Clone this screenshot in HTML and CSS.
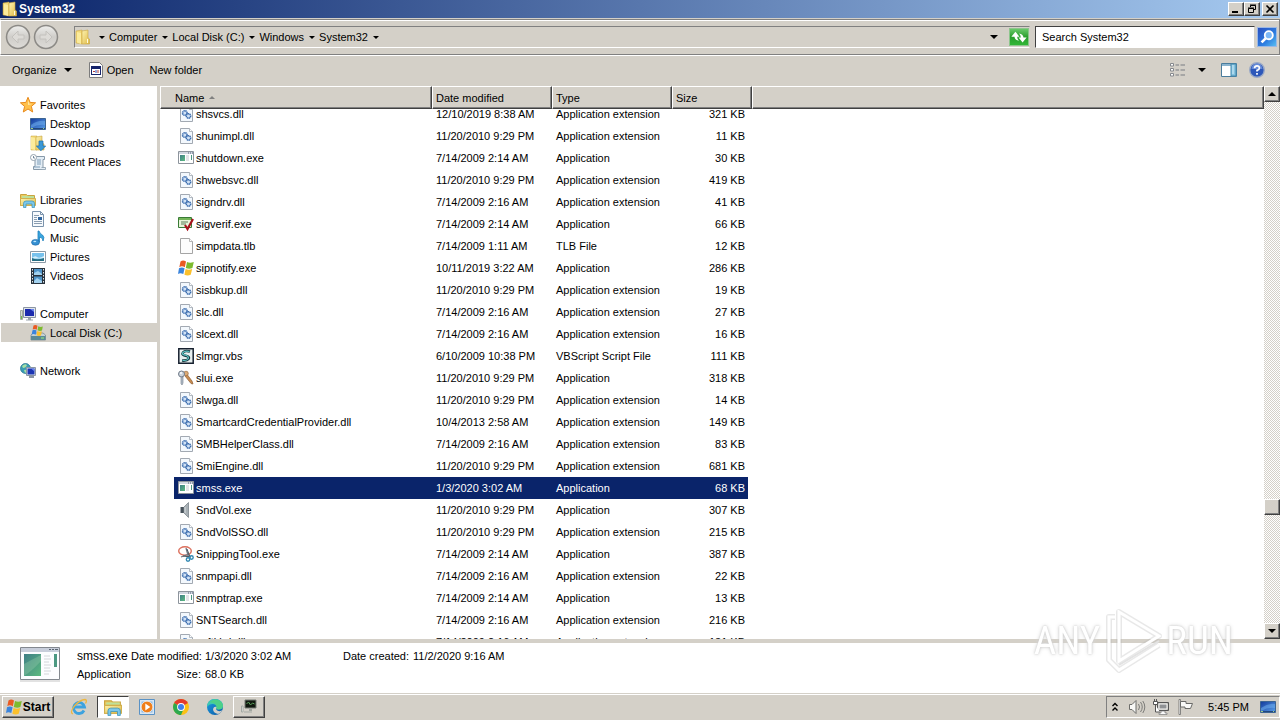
FILE: index.html
```
<!DOCTYPE html>
<html lang="en">
<head>
    <meta charset="UTF-8">
    <meta name="viewport" content="width=device-width, initial-scale=1.0">
    <title>System32</title>
    <link rel="stylesheet" href="styles.css">
</head>
<body>

    <!-- Icon set -->
    <svg class="icon-defs" aria-hidden="true">
        <defs>
            <linearGradient id="g-folder" x1="0" y1="0" x2="1" y2="1">
                <stop offset="0" stop-color="#fdf3b0"/><stop offset="1" stop-color="#dfb945"/>
            </linearGradient>
            <linearGradient id="g-screen" x1="0" y1="0" x2="1" y2="1">
                <stop offset="0" stop-color="#123a9c"/><stop offset="1" stop-color="#5aa0ea"/>
            </linearGradient>
            <linearGradient id="g-teal" x1="0" y1="0" x2="1" y2="1">
                <stop offset="0" stop-color="#3f7f86"/><stop offset="1" stop-color="#5cba80"/>
            </linearGradient>
            <linearGradient id="g-round" x1="0" y1="0" x2="0" y2="1">
                <stop offset="0" stop-color="#efefed"/><stop offset=".5" stop-color="#cfcdc9"/><stop offset="1" stop-color="#dedcd8"/>
            </linearGradient>
            <linearGradient id="g-edge" x1="0" y1="0" x2="1" y2="1">
                <stop offset="0" stop-color="#1b9de2"/><stop offset="1" stop-color="#0c59a4"/>
            </linearGradient>

            <symbol id="i-folder" viewBox="0 0 16 16">
                <path d="M1 2l6-1v14l-6-1z" fill="#f3d978" stroke="#c7a13a" stroke-width=".5"/>
                <path d="M7 2l6-1v8l1.500 1v5H7z" fill="url(#g-folder)" stroke="#c9a640" stroke-width=".6"/>
                <path d="M2 3l4 1v11l-4-1.500z" fill="#fbeb9c"/>
                <path d="M12.500 10v4" stroke="#fffbe0"/>
            </symbol>
            <symbol id="i-dll" viewBox="0 0 16 16">
                <path d="M2.500 .5h9l3 3v12h-12z" fill="#f3f8fd" stroke="#a2a9b2"/>
                <path d="M11.500 .5v3h3" fill="#fff" stroke="#a2a9b2" stroke-width=".8"/>
                <circle cx="6.800" cy="7" r="2.300" fill="#cfe1f5" stroke="#3b6cae" stroke-width="1.500" stroke-dasharray="1.300 .4"/>
                <circle cx="10.500" cy="10" r="2.200" fill="#cfe1f5" stroke="#3b6cae" stroke-width="1.500" stroke-dasharray="1.300 .4"/>
            </symbol>
            <symbol id="i-file" viewBox="0 0 16 16">
                <path d="M2.500 .5h9l3 3v12h-12z" fill="#fcfcfc" stroke="#a5a5a5"/>
                <path d="M11.500 .5v3h3" fill="#fff" stroke="#a5a5a5" stroke-width=".8"/>
            </symbol>
            <symbol id="i-exe" viewBox="0 0 16 16">
                <path d="M.5 1.500h15v12H.5z" fill="#fff" stroke="#8d949c"/>
                <path d="M1 2h14v2H1z" fill="#d2d7e0"/>
                <path d="M10 3h1m1 0h1m1 0h1" stroke="#51627a"/>
                <path d="M2 5h5v6H2z" fill="url(#g-teal)"/>
                <path d="M8 6h3M8 8h3M8 10h3" stroke="#c5c9cf"/>
                <path d="M13 5h1v5h-1z" fill="#4c9983"/>
            </symbol>
            <symbol id="i-exe-large" viewBox="0 0 42 36">
                <path d="M1.500 .5h39v32h-39z" fill="#fcfdff" stroke="#83888f"/>
                <path d="M2 1h38v4H2z" fill="#c8cedb"/>
                <path d="M30 2.500h2m1 0h2m1 0h3" stroke="#5b6572"/>
                <path d="M5 7h17v22H5z" fill="url(#g-teal)"/>
                <path d="M5 17q9-5 17-9v6q-9 10-17 15z" fill="#92c8a8" opacity=".4"/>
                <path d="M25 9h6M25 12h7M25 15h5M25 18h7M25 21h6M25 24h7M25 27h5" stroke="#d3d6da"/>
                <path d="M35 7h3v13h-3z" fill="#4c9983"/>
                <path d="M1 34h40" stroke="#c5c5c5"/>
            </symbol>
            <symbol id="i-sigverif" viewBox="0 0 16 16">
                <path d="M.5 1.500h13v10H.5z" fill="#e8f4da" stroke="#397b36"/>
                <path d="M1 2h12v2H1z" fill="#74b559"/>
                <path d="M3 6h7M3 8h5" stroke="#5b7c58"/>
                <path d="M7 9l2.500 4L15 3" fill="none" stroke="#a8121c" stroke-width="2.200"/>
            </symbol>
            <symbol id="i-flag" viewBox="0 0 16 16">
                <path d="M2.500 1.500Q5 -.5 8 1.500L6.800 7.300Q4 5.500 1.300 7.200z" fill="#ea5a22"/>
                <path d="M9 2q3 1.500 6.800 0l-1.400 6q-3 1.500-6.600 0z" fill="#7dbb2e"/>
                <path d="M1 8.300q3-1.700 5.600 0l-1.300 5.700q-3-1.600-5.300 0z" fill="#3a84dc"/>
                <path d="M7.600 9q3 1.600 6.600 0l-1.500 5.700q-3 1.600-6.300 0z" fill="#fbc02c"/>
            </symbol>
            <symbol id="i-vbs" viewBox="0 0 16 16">
                <path d="M.8 .8h14.400v14.400H.8z" fill="#e7efef" stroke="#16202e" stroke-width="1.500"/>
                <path d="M12 3.500Q7 2 5 4.500t3.500 3.500q3.500 1 2 3T4 12.500" fill="none" stroke="#17363e" stroke-width="2.600"/>
                <path d="M11.500 3.500Q7 2.500 5 4.500t3.500 3q3 1.500 1.500 3.500T4.500 12.300" fill="none" stroke="#5cc4c4" stroke-width="1.200"/>
            </symbol>
            <symbol id="i-keys" viewBox="0 0 16 16">
                <path d="M8 3l6 8 1 3-2-.5L7 6" fill="#c98c50" stroke="#8e5e35" stroke-width=".7"/>
                <circle cx="8" cy="3.500" r="2.300" fill="#dbaa76" stroke="#9c6c3c" stroke-width=".7"/>
                <circle cx="3.500" cy="4" r="3" fill="#ccd4dd" stroke="#707b88"/>
                <circle cx="3" cy="3" r="1" fill="#fff"/>
                <path d="M3 7h2v6l-1 2-1-1.500z" fill="#b4bfcb" stroke="#707b88" stroke-width=".6"/>
            </symbol>
            <symbol id="i-volume" viewBox="0 0 16 16">
                <path d="M2.500 5H6v6H2.500z" fill="#48535c"/>
                <path d="M6 5l4.500-4.500v15L6 11z" fill="#a8b0b5" stroke="#7c858b" stroke-width=".8"/>
                <path d="M7 5v6" stroke="#dce1e4"/>
            </symbol>
            <symbol id="i-snip" viewBox="0 0 16 16">
                <ellipse cx="7" cy="5" rx="6.300" ry="4.200" fill="none" stroke="#dc6f5c" stroke-width="1.400"/>
                <path d="M8 2l2.500 9M3 11l8-3" stroke="#707984" stroke-width="1.300"/>
                <path d="M9 3l3 8M5 10l8 1" stroke="#49525a"/>
                <circle cx="10" cy="13.500" r="1.700" fill="none" stroke="#338ab4" stroke-width="1.400"/>
                <circle cx="13.500" cy="11.500" r="1.700" fill="none" stroke="#338ab4" stroke-width="1.400"/>
            </symbol>
            <symbol id="i-star" viewBox="0 0 16 16">
                <path d="M8 .3l2.100 5.100 5.500.4-4.200 3.600 1.300 5.600L8 12l-4.700 3 1.300-5.600L.4 5.800l5.500-.4z" fill="#ffc04a" stroke="#e88a1d" stroke-width="1"/>
                <path d="M8 3l1.300 3.700 3 .3-4.300 1z" fill="#ffe9a6"/>
            </symbol>
            <symbol id="i-desktop" viewBox="0 0 16 16">
                <path d="M.5 2.500h15v11H.5z" fill="url(#g-screen)" stroke="#3c6492"/>
                <path d="M1 9q7-5 14-4v4q-7-1-14 3z" fill="#74b4f2" opacity=".5"/>
                <path d="M1 12.500h14" stroke="#22467e"/>
                <path d="M1 12.500h2m10 0h1" stroke="#9bcd85"/>
            </symbol>
            <symbol id="i-downloads" viewBox="0 0 16 16">
                <path d="M1 1h6v14H1z" fill="#f3d978" stroke="#c7a13a" stroke-width=".5"/>
                <path d="M6 2l6-1v7l2 1v6H6z" fill="url(#g-folder)" stroke="#c9a640" stroke-width=".6"/>
                <path d="M1 2l4 1v12l-4-1z" fill="#fbeb9c"/>
                <path d="M9 6h4v5h2.700L11 15.700 6.300 11H9z" fill="#3a98d6" stroke="#1e6eaf" stroke-width=".7"/>
            </symbol>
            <symbol id="i-recent" viewBox="0 0 16 16">
                <path d="M5 2.500h9.500v3H13v8q0 2-2 2H3.500v-3H5z" fill="#e3edf5" stroke="#8799a9"/>
                <path d="M7 6h4M7 8h4M7 10h4M4 13h6" stroke="#7e9eb9"/>
                <path d="M11.500 13.500h4v2h-6" fill="#e3edf5" stroke="#8799a9" stroke-width=".8"/>
                <circle cx="3.500" cy="3.500" r="3" fill="#fff" stroke="#94a1ad"/>
                <path d="M3.500 2v2H5" fill="none" stroke="#536c84" stroke-width=".8"/>
            </symbol>
            <symbol id="i-libraries" viewBox="0 0 16 16">
                <path d="M.5 2.500h6l1 1h7v10H.5z" fill="#eacb62" stroke="#c9a43f"/>
                <path d="M2 4h12v2H2z" fill="#bde09a"/>
                <path d="M.5 6.500h15v7H.5z" fill="url(#g-folder)" stroke="#d2b04d"/>
                <path d="M3.500 15.500v-4q0-2.500 2.500-2.500h6q2.500 0 2.500 2.500v4H12v-3.500H6v3.500z" fill="#7cc7ea" stroke="#3992bc" stroke-width=".7"/>
            </symbol>
            <symbol id="i-documents" viewBox="0 0 16 16">
                <path d="M2.500 .5h8l3 3v12h-11z" fill="#f7fafd" stroke="#7b93ac"/>
                <path d="M10.500 .5v3h3" fill="none" stroke="#7b93ac"/>
                <path d="M4 4.500h5M4 6.500h3M4 8.500h3M4 10.500h8M4 12.500h8" stroke="#8a9db1"/>
                <path d="M8 6h4v3H8z" fill="#30659e"/>
            </symbol>
            <symbol id="i-music" viewBox="0 0 16 16">
                <path d="M8 12V1h1q1 3 3.500 4 2.500 2 .5 6 0-3.500-3.500-4v5" fill="#3aa6df" stroke="#1f80bd" stroke-width=".8"/>
                <ellipse cx="5.500" cy="12.300" rx="4" ry="2.900" fill="#3690d2" stroke="#1a65a4" stroke-width=".6"/>
                <ellipse cx="4.800" cy="11.500" rx="1.500" ry=".8" fill="#bfe8ff"/>
            </symbol>
            <symbol id="i-pictures" viewBox="0 0 16 16">
                <path d="M.5 2.500h15v11H.5z" fill="#fff" stroke="#8c9aa6"/>
                <path d="M2 4h12v8H2z" fill="#77c1ec"/>
                <path d="M2 9q3-3 5-1t7-1v2.500H2z" fill="#d6eef8"/>
                <path d="M2 9q5 2.500 12 0v3H2z" fill="#256e83"/>
            </symbol>
            <symbol id="i-videos" viewBox="0 0 16 16">
                <path d="M1 0h14v16H1z" fill="#29333d"/>
                <path d="M4 1h8v6H4zM4 8.500h8v6.500H4z" fill="#4f94c8"/>
                <path d="M4 5l4-2 4 3v1H4zM4 13l3-3 5 3v2H4z" fill="#a3d2ef"/>
                <path d="M2.500 1v14M13.500 1v14" stroke="#e4e9ec" stroke-dasharray="1.500 1.500"/>
            </symbol>
            <symbol id="i-computer" viewBox="0 0 16 16">
                <path d="M.5 4.500h2v9h-2z" fill="#d5dad2" stroke="#a3aba1"/>
                <path d="M1.500 10v3" stroke="#71ba4c"/>
                <path d="M3.500 1.500h12v10h-12z" fill="#dfe4ea" stroke="#8b95a3"/>
                <path d="M5 3h9v7H5z" fill="#1b2aad"/>
                <path d="M10 3h4v3z" fill="#6a86ec"/>
                <path d="M8 12h3v1.500h2v1H6v-1h2z" fill="#9ca5ae"/>
            </symbol>
            <symbol id="i-disk" viewBox="0 0 16 16">
                <path d="M1 10l2-2h10l2.500 2v5H1z" fill="#c4d0d6" stroke="#71838b" stroke-width=".7"/>
                <path d="M1 11h14.500v4H1z" fill="#5b8995"/>
                <path d="M11 13h3" stroke="#9aef7d"/>
                <path d="M3.500 .5q2-1 4 .3l-.8 4q-2-1.300-4-.3z" fill="#ea5a22"/>
                <path d="M8.300 1.200q2 1.200 4.500.3L12 5.500q-2.300 1-4.500-.3z" fill="#7dbb2e"/>
                <path d="M2.500 5.300q2-1 4 .3L5.700 9.700q-2-1.200-4-.3z" fill="#3a84dc"/>
                <path d="M7.300 6q2 1.200 4.500.3L11 10.500q-2.300 1-4.500-.3z" fill="#fbc02c"/>
            </symbol>
            <symbol id="i-network" viewBox="0 0 16 16">
                <circle cx="5.500" cy="5.500" r="5" fill="#3a9bb4" stroke="#1c6e8d" stroke-width=".7"/>
                <path d="M2 3q3-3 5-1-1 3-4 3zM4 7q3-1 4 1l-3 2z" fill="#a4dfa5"/>
                <path d="M6.500 4.500h9v8h-9z" fill="#dde3ea" stroke="#8b95a3"/>
                <path d="M7.500 5.500h7v6h-7z" fill="#1b35b4"/>
                <path d="M11 5.500h3.500v3z" fill="#6a86ec"/>
                <path d="M9 14h5" stroke="#8b95a3" stroke-width="2"/>
            </symbol>
            <symbol id="i-open" viewBox="0 0 16 16">
                <path d="M1.500 .5h10l3 3v12h-13z" fill="#fff" stroke="#7c7c7c"/>
                <path d="M3 4h10v9H3z" fill="#16246b"/>
                <path d="M4 7h8v5H4z" fill="#fff"/>
                <path d="M5 9.500h2M10 8v3" stroke="#b33b3b"/>
                <path d="M8 8v3" stroke="#2d55b8"/>
            </symbol>
            <symbol id="i-view" viewBox="0 0 16 16">
                <path d="M.5 1.500h3v2.500h-3zM.5 6.500h3V9h-3zM.5 11.500h3V14h-3z" fill="#fff" stroke="#85888d"/>
                <path d="M5.500 3H9m1.500 0H15M5.500 8H9m1.500 0H15M5.500 13H9m1.500 0H15" stroke="#797c82"/>
            </symbol>
            <symbol id="i-pane" viewBox="0 0 16 16">
                <path d="M.5 1.500h15v13H.5z" fill="#fff" stroke="#4a7c9c"/>
                <path d="M1 2h9v2H1z" fill="#8ab4cf"/>
                <path d="M10 2h5v12h-5z" fill="#85c3e0" stroke="#4388ad"/>
                <path d="M12 3v9" stroke="#d5eefa"/>
            </symbol>
            <symbol id="i-help" viewBox="0 0 16 16">
                <circle cx="8" cy="8" r="7.300" fill="#2d57b9" stroke="#9aa9c6" stroke-width="1.400"/>
                <path d="M2.500 7a5.500 5.500 0 0 1 11 0z" fill="#7e9fe6" opacity=".7"/>
                <path d="M5.500 6.200Q5.700 3.800 8 3.800t2.400 2.100Q10.400 7.500 8 8.400v1.200M8 11v1.800" fill="none" stroke="#fff" stroke-width="1.700"/>
            </symbol>
            <symbol id="i-ie" viewBox="0 0 18 18">
                <path d="M14 12.500A5.500 5.500 0 1 1 14.500 9H4.500" fill="none" stroke="#3ca2df" stroke-width="2.800"/>
                <path d="M3 16Q-.5 15 4 8.500 10 1.500 15 1.500 17.500 2 15.500 5.500" fill="none" stroke="#eeb73f" stroke-width="1.300"/>
            </symbol>
            <symbol id="i-wmp" viewBox="0 0 18 18">
                <path d="M1.500 1.500h15v15h-15z" fill="#d7e6f4" stroke="#5a92c5"/>
                <path d="M3.500 3.500h11v11h-11z" fill="#8fbbe3"/>
                <circle cx="9" cy="9" r="5.800" fill="#ef7e1a" stroke="#fff" stroke-width=".6"/>
                <path d="M7.300 5.500l5 3.500-5 3.500z" fill="#fff"/>
            </symbol>
            <symbol id="i-chrome" viewBox="0 0 18 18">
                <circle cx="9" cy="9" r="8" fill="#fbc116"/>
                <path d="M9 9L2.100 5A8 8 0 0 1 15.900 5z" fill="#e33b2e"/>
                <path d="M9 9L2.100 5A8 8 0 0 0 9 17z" fill="#2da94f"/>
                <path d="M9 9h3.500L9 17a8 8 0 0 1-2-.3z" fill="#2da94f"/>
                <circle cx="9" cy="9" r="3.900" fill="#fff"/>
                <circle cx="9" cy="9" r="3" fill="#3f80ec"/>
            </symbol>
            <symbol id="i-edge" viewBox="0 0 18 18">
                <circle cx="9" cy="9" r="8" fill="url(#g-edge)"/>
                <path d="M1 9Q1.500 1 9 1q7 0 8 6.500.3 4-4.500 4-3 0-2-2.500Q10 6 6.500 6 3 6 1 9z" fill="#3ec9b0"/>
                <path d="M3.500 4Q9-.5 14 3q3 2 3 5-1 3.500-4.500 3.500-3 0-2-2.500Q10.500 5 3.500 4z" fill="#54d378" opacity=".7"/>
                <path d="M10.500 9q-1.500 3 2 4 2.500.5 4-1-1.500 3-4.500 4-5-1-5-5 1-3 3.500-2z" fill="#d4d0c8"/>
            </symbol>
            <symbol id="i-remote" viewBox="0 0 18 18">
                <path d="M5 2h11v8H5z" fill="#10180f" stroke="#747a74"/>
                <path d="M6.500 6l2-2 2 3 2-2 2 1" fill="none" stroke="#5aa05b"/>
                <path d="M9 11h3v2H9z" fill="#a0a59f"/>
                <path d="M1.500 8v6H3V8zM4 14h8" fill="#f4f5f3" stroke="#a3a8a3"/>
            </symbol>
            <symbol id="i-sound" viewBox="0 0 18 18">
                <path d="M1.500 6.500H4l4-4v13l-4-4H1.500z" fill="#f8f8f6" stroke="#6d6d6a"/>
                <path d="M10.500 6q2 3 0 6M12.500 4q3.500 5 0 10M14.800 3q4 6 0 12" fill="none" stroke="#7c7c79"/>
            </symbol>
            <symbol id="i-lan" viewBox="0 0 18 18">
                <path d="M5.500 4.500h11v8h-11z" fill="#b6b5b1" stroke="#555"/>
                <path d="M7 6h8v5H7z" fill="#8f9194" stroke="#f6f6f4"/>
                <path d="M9 13h4v2h2v1.500H7V15h2z" fill="#fafafa" stroke="#666" stroke-width=".6"/>
                <path d="M1.500 3.500h4v3h-4zM2.500 1v2M4.500 1v2M3.500 7v7H8" fill="#fff" stroke="#555"/>
            </symbol>
            <symbol id="i-action" viewBox="0 0 18 18">
                <path d="M3 1.500h1.500v15H3z" fill="#fff" stroke="#6a6a68" stroke-width=".8"/>
                <path d="M4.500 3.500H10v2h6.500l-2 5H9v-1.500H4.500z" fill="#f9f9f7" stroke="#6a6a68"/>
            </symbol>
        </defs>
    </svg>

    <header class="title-bar">
        <svg class="icon"><use href="#i-folder"/></svg>
        <h1>System32</h1>
        <div class="window-buttons">
            <button class="raised" aria-label="Minimize"><svg viewBox="0 0 12 10"><path d="M2 8h6" stroke="#000" stroke-width="2"/></svg></button>
            <button class="raised" aria-label="Restore"><svg viewBox="0 0 12 10"><path d="M4.500 3V1.500h5v4H8M4 1h6" fill="none" stroke="#000"/><path d="M2.500 4.500h5v4h-5zM2 4h6" fill="none" stroke="#000"/></svg></button>
            <button class="raised close" aria-label="Close"><svg viewBox="0 0 12 10"><path d="M2.500 1.500l7 7M9.500 1.500l-7 7" stroke="#000" stroke-width="1.600"/></svg></button>
        </div>
    </header>

    <div class="nav-bar">
        <div class="history">
            <button aria-label="Back"><svg viewBox="0 0 26 26"><circle cx="13" cy="13" r="11.500" fill="url(#g-round)" stroke="#8c8a86" stroke-width="1.500"/><path d="M13 7l-6 6 6 6v-4h6v-4h-6z" fill="#dddbd7" stroke="#c4c2be"/></svg></button>
            <button aria-label="Forward"><svg viewBox="0 0 26 26"><circle cx="13" cy="13" r="11.500" fill="url(#g-round)" stroke="#8c8a86" stroke-width="1.500"/><path d="M13 7l6 6-6 6v-4H7v-4h6z" fill="#dddbd7" stroke="#c4c2be"/></svg></button>
        </div>
        <nav class="address">
            <svg class="icon"><use href="#i-folder"/></svg>
            <span class="arrow"></span>
            <a href="#">Computer</a><span class="arrow"></span>
            <a href="#">Local Disk (C:)</a><span class="arrow"></span>
            <a href="#">Windows</a><span class="arrow"></span>
            <a href="#">System32</a><span class="arrow"></span>
            <button class="history-arrow" aria-label="Previous locations"><span class="arrow big"></span></button>
            <button class="refresh" aria-label="Refresh"><svg viewBox="0 0 20 18"><path d="M1.500 8.500L6 3l4.500 5.500H8q0 3 2 4.500-4.500-.5-5-4.500z" fill="#fff"/><path d="M18.500 9.500L14 15 9.500 9.500H12q0-3-2-4.500 4.500.5 5 4.500z" fill="#fff"/></svg></button>
        </nav>
        <form class="search">
            <input type="text" aria-label="Search" value="Search System32">
            <button type="button" aria-label="Search"><svg viewBox="0 0 20 20"><circle cx="12" cy="8" r="4.500" fill="#7db8f6" stroke="#fff" stroke-width="2"/><path d="M8.500 11.500L4 16" stroke="#fff" stroke-width="3"/></svg></button>
        </form>
    </div>

    <div class="toolbar">
        <button class="organize">Organize <span class="arrow big"></span></button>
        <button class="open"><svg class="icon"><use href="#i-open"/></svg> Open</button>
        <button>New folder</button>
        <div class="toolbar-right">
            <button aria-label="Change view"><svg class="icon"><use href="#i-view"/></svg></button>
            <button class="more-views" aria-label="More views"><span class="arrow big"></span></button>
            <button aria-label="Preview pane"><svg class="icon"><use href="#i-pane"/></svg></button>
            <button aria-label="Help"><svg class="icon"><use href="#i-help"/></svg></button>
        </div>
    </div>

    <main>
        <aside class="sidebar">
            <ul>
                <li><a href="#"><svg class="icon"><use href="#i-star"/></svg>Favorites</a></li>
                <li class="child"><a href="#"><svg class="icon"><use href="#i-desktop"/></svg>Desktop</a></li>
                <li class="child"><a href="#"><svg class="icon"><use href="#i-downloads"/></svg>Downloads</a></li>
                <li class="child"><a href="#"><svg class="icon"><use href="#i-recent"/></svg>Recent Places</a></li>
            </ul>
            <ul>
                <li><a href="#"><svg class="icon"><use href="#i-libraries"/></svg>Libraries</a></li>
                <li class="child"><a href="#"><svg class="icon"><use href="#i-documents"/></svg>Documents</a></li>
                <li class="child"><a href="#"><svg class="icon"><use href="#i-music"/></svg>Music</a></li>
                <li class="child"><a href="#"><svg class="icon"><use href="#i-pictures"/></svg>Pictures</a></li>
                <li class="child"><a href="#"><svg class="icon"><use href="#i-videos"/></svg>Videos</a></li>
            </ul>
            <ul>
                <li><a href="#"><svg class="icon"><use href="#i-computer"/></svg>Computer</a></li>
                <li class="child current"><a href="#"><svg class="icon"><use href="#i-disk"/></svg>Local Disk (C:)</a></li>
            </ul>
            <ul>
                <li><a href="#"><svg class="icon"><use href="#i-network"/></svg>Network</a></li>
            </ul>
        </aside>

        <section class="file-view" id="file-view">
            <table>
                <thead>
                    <tr>
                        <th class="col-name">Name <span class="sort"></span></th>
                        <th class="col-date">Date modified</th>
                        <th class="col-type">Type</th>
                        <th class="col-size">Size</th>
                        <th></th>
                    </tr>
                </thead>
                <tbody id="file-list">
                    <!-- File rows are added by the script -->
                </tbody>
            </table>
        </section>

        <div class="scrollbar">
            <button class="raised" aria-label="Scroll up"><span class="arrow big up"></span></button>
            <div class="track-above"></div>
            <div class="thumb raised"></div>
            <div class="track-below"></div>
            <button class="raised" aria-label="Scroll down"><span class="arrow big"></span></button>
        </div>
    </main>

    <section class="details">
        <svg class="preview"><use href="#i-exe-large"/></svg>
        <dl>
            <dt class="file-name">smss.exe</dt><dd class="label">Date modified:</dd><dd>1/3/2020 3:02 AM</dd><dd class="label">Date created:</dd><dd>11/2/2020 9:16 AM</dd>
            <dt>Application</dt><dd class="label">Size:</dd><dd>68.0 KB</dd>
        </dl>
    </section>

    <footer class="taskbar">
        <button class="start raised"><svg class="icon"><use href="#i-flag"/></svg>Start</button>
        <div class="tasks">
            <button aria-label="Internet Explorer"><svg><use href="#i-ie"/></svg></button>
            <button class="pressed" aria-label="File Explorer"><svg><use href="#i-libraries"/></svg></button>
            <button aria-label="Media Player"><svg><use href="#i-wmp"/></svg></button>
            <button aria-label="Chrome"><svg><use href="#i-chrome"/></svg></button>
            <button aria-label="Edge"><svg><use href="#i-edge"/></svg></button>
            <button class="raised" aria-label="Remote"><svg><use href="#i-remote"/></svg></button>
        </div>
        <div class="tray">
            <svg class="chevrons" viewBox="0 0 8 10"><path d="M1.500 4L4 1.500 6.500 4M1.500 8.500L4 6l2.500 2.500" fill="none" stroke="#000" stroke-width="1.400"/></svg>
            <svg><use href="#i-sound"/></svg>
            <svg><use href="#i-lan"/></svg>
            <svg><use href="#i-action"/></svg>
            <span class="clock">5:45 PM</span>
            <svg class="icon"><use href="#i-desktop"/></svg>
        </div>
    </footer>

    <div class="watermark">
        <span>ANY</span>
        <svg viewBox="0 0 58 66">
            <path d="M15 4L55 28 15 53zM11 9H5v43l10 10 40-25" fill="none" stroke="#b4b4b4" stroke-width="6" stroke-linejoin="round" opacity=".3"/>
            <path d="M15 4L55 28 15 53zM11 9H5v43l10 10 40-25" fill="none" stroke="#fff" stroke-width="3"/>
            <path d="M15 57l40-24" stroke="#e2e2e2" stroke-width="2"/>
        </svg>
        <span>RUN</span>
    </div>

    <script>
        const files = [
            ['shsvcs.dll', '12/10/2019 8:38 AM', 'Application extension', '321 KB', 'dll'],
            ['shunimpl.dll', '11/20/2010 9:29 PM', 'Application extension', '11 KB', 'dll'],
            ['shutdown.exe', '7/14/2009 2:14 AM', 'Application', '30 KB', 'exe'],
            ['shwebsvc.dll', '11/20/2010 9:29 PM', 'Application extension', '419 KB', 'dll'],
            ['signdrv.dll', '7/14/2009 2:16 AM', 'Application extension', '41 KB', 'dll'],
            ['sigverif.exe', '7/14/2009 2:14 AM', 'Application', '66 KB', 'sigverif'],
            ['simpdata.tlb', '7/14/2009 1:11 AM', 'TLB File', '12 KB', 'file'],
            ['sipnotify.exe', '10/11/2019 3:22 AM', 'Application', '286 KB', 'flag'],
            ['sisbkup.dll', '11/20/2010 9:29 PM', 'Application extension', '19 KB', 'dll'],
            ['slc.dll', '7/14/2009 2:16 AM', 'Application extension', '27 KB', 'dll'],
            ['slcext.dll', '7/14/2009 2:16 AM', 'Application extension', '16 KB', 'dll'],
            ['slmgr.vbs', '6/10/2009 10:38 PM', 'VBScript Script File', '111 KB', 'vbs'],
            ['slui.exe', '11/20/2010 9:29 PM', 'Application', '318 KB', 'keys'],
            ['slwga.dll', '11/20/2010 9:29 PM', 'Application extension', '14 KB', 'dll'],
            ['SmartcardCredentialProvider.dll', '10/4/2013 2:58 AM', 'Application extension', '149 KB', 'dll'],
            ['SMBHelperClass.dll', '7/14/2009 2:16 AM', 'Application extension', '83 KB', 'dll'],
            ['SmiEngine.dll', '11/20/2010 9:29 PM', 'Application extension', '681 KB', 'dll'],
            ['smss.exe', '1/3/2020 3:02 AM', 'Application', '68 KB', 'exe'],
            ['SndVol.exe', '11/20/2010 9:29 PM', 'Application', '307 KB', 'volume'],
            ['SndVolSSO.dll', '11/20/2010 9:29 PM', 'Application extension', '215 KB', 'dll'],
            ['SnippingTool.exe', '7/14/2009 2:14 AM', 'Application', '387 KB', 'snip'],
            ['snmpapi.dll', '7/14/2009 2:16 AM', 'Application extension', '22 KB', 'dll'],
            ['snmptrap.exe', '7/14/2009 2:14 AM', 'Application', '13 KB', 'exe'],
            ['SNTSearch.dll', '7/14/2009 2:16 AM', 'Application extension', '216 KB', 'dll'],
            ['softkbd.dll', '7/14/2009 2:16 AM', 'Application extension', '131 KB', 'dll'],
        ];

        const fileList = document.getElementById('file-list');

        files.forEach(([name, date, type, size, icon]) => {
            const row = document.createElement('tr');
            if (name === 'smss.exe') {
                row.className = 'selected';
            }
            row.innerHTML = `
                <td class="name"><svg class="icon"><use href="#i-${icon}"/></svg>${name}</td>
                <td>${date}</td>
                <td>${type}</td>
                <td class="size">${size}</td>
            `;
            fileList.appendChild(row);
        });

        // the first row is partly scrolled under the header
        document.getElementById('file-view').scrollTop = 6;
    </script>
</body>
</html>
```
FILE: styles.css
```
/* General Styles */
* {
    box-sizing: border-box;
}

body {
    height: 100vh;
    margin: 0;
    display: flex;
    flex-direction: column;
    overflow: hidden;
    font-family: "Liberation Sans", Arial, sans-serif;
    font-size: 11px;
    color: #000;
    background-color: #d4d0c8;
}

a {
    color: inherit;
    text-decoration: none;
}

button {
    display: flex;
    align-items: center;
    justify-content: center;
    padding: 0;
    border: none;
    background: none;
    font: inherit;
    color: inherit;
}

.icon-defs {
    position: absolute;
    width: 0;
    height: 0;
}

.icon {
    width: 16px;
    height: 16px;
    flex: none;
}

.raised {
    background-color: #d4d0c8;
    border: 1px solid;
    border-color: #fff #404040 #404040 #fff;
    box-shadow: inset -1px -1px #808080;
}

.arrow {
    width: 0;
    height: 0;
    border: 3px solid transparent;
    border-top-color: #000;
    border-bottom: none;
}

.arrow.big {
    border-width: 4px 4px 0;
}

.arrow.up {
    border-width: 0 4px 4px;
    border-style: solid;
    border-color: transparent transparent #000;
}

/* Title Bar */
.title-bar {
    display: flex;
    align-items: center;
    height: 18px;
    padding: 0 2px;
    background: linear-gradient(to right, #0a246a, #a6caf0);
    color: #fff;
}

.title-bar h1 {
    margin: 0 auto 0 1px;
    font-size: 12px;
}

.window-buttons {
    display: flex;
}

.window-buttons button {
    width: 16px;
    height: 14px;
}

.window-buttons svg {
    width: 12px;
    height: 10px;
}

.window-buttons .close {
    margin-left: 2px;
}

/* Navigation */
.nav-bar {
    display: flex;
    align-items: center;
    height: 36px;
    margin-top: 1px;
    padding: 0 2px 0 4px;
    border: 1px solid;
    border-color: #808080 #808080 #808080 #fff;
    box-shadow: 0 1px #fff, inset 0 1px #fff;
}

.history {
    display: flex;
    width: 69px;
    gap: 2px;
}

.history svg {
    display: block;
    width: 26px;
    height: 26px;
}

.address {
    flex: 1;
    display: flex;
    align-items: center;
    height: 22px;
    border: 1px solid;
    border-color: #808080 #d4d0c8 #fff #808080;
}

.address .icon {
    margin-right: 8px;
}

.address a {
    margin: 0 5px 0 4px;
}

.history-arrow {
    margin-left: auto;
    width: 30px;
    height: 20px;
}

.refresh {
    width: 20px;
    height: 18px;
    border: 1px solid #8cc58c;
    background: linear-gradient(#69c96a, #2b9e2e 50%, #31b636);
}

.search {
    display: flex;
    align-items: center;
    gap: 2px;
    width: 242px;
    margin-left: 5px;
}

.search input {
    flex: 1;
    min-width: 0;
    height: 22px;
    padding: 0 6px;
    border: 1px solid;
    border-color: #404040 #d4d0c8 #fff #404040;
    font: inherit;
}

.search button {
    width: 20px;
    height: 20px;
    border: 1px solid #9cb8e4;
    background: linear-gradient(135deg, #2a50c0, #2d7de0 60%, #58bdf2);
}

/* Toolbar */
.toolbar {
    display: flex;
    align-items: center;
    height: 31px;
    padding: 0 15px 2px 12px;
}

.organize {
    gap: 7px;
    margin-right: 16px;
}

.open {
    gap: 3px;
    margin-right: 16px;
}

.toolbar-right {
    display: flex;
    gap: 12px;
    margin-left: auto;
}

.more-views {
    margin-right: 3px;
}

/* Main */
main {
    flex: 1;
    min-height: 0;
    display: flex;
    background-color: #fff;
}

.sidebar {
    width: 160px;
    flex: none;
    padding: 9px 0 0 1px;
    border-right: 3px solid #d4d0c8;
    overflow: hidden;
}

.sidebar ul {
    margin: 0 0 19px;
    padding: 0;
    list-style: none;
}

.sidebar a {
    display: flex;
    align-items: center;
    gap: 4px;
    height: 19px;
    padding-left: 19px;
}

.sidebar .child a {
    padding-left: 29px;
}

.sidebar .current {
    background-color: #d4d0c8;
}

/* File Table Styles */
.file-view {
    flex: 1;
    overflow: hidden;
}

table {
    width: 100%;
    border-spacing: 0;
    table-layout: fixed;
}

th {
    position: sticky;
    top: 0;
    height: 23px;
    padding: 0 3px;
    background-color: #d4d0c8;
    border: 1px solid;
    border-color: #fff #404040 #404040 #fff;
    box-shadow: inset -1px -1px #808080;
    font-weight: normal;
    text-align: left;
}

.col-name {
    width: 272px;
    padding-left: 14px;
}

.col-date,
.col-type {
    width: 120px;
}

.col-size {
    width: 80px;
}

.sort {
    display: inline-block;
    margin: 0 0 3px 2px;
    border: 3px solid transparent;
    border-bottom-color: #808080;
    border-top: none;
}

td {
    height: 22px;
    padding: 0 4px;
    background-clip: padding-box;
    white-space: nowrap;
}

td.name {
    border-left: 14px solid transparent;
}

td.name .icon {
    margin-right: 2px;
    vertical-align: -4px;
}

td.size {
    padding-right: 3px;
    border-right: 4px solid transparent;
    text-align: right;
}

.selected td {
    background-color: #0a246a;
    color: #fff;
}

/* Scrollbar */
.scrollbar {
    display: flex;
    flex-direction: column;
    width: 16px;
    background: repeating-conic-gradient(#fff 0 25%, #d4d0c8 0 50%) 0 0 / 2px 2px;
}

.scrollbar button,
.thumb {
    width: 16px;
    height: 16px;
}

.track-above {
    flex: 11;
}

.track-below {
    flex: 3;
}

/* Details Pane */
.details {
    display: flex;
    height: 54px;
    padding: 4px 19px;
    border-top: 4px solid #d4d0c8;
    background-color: #fff;
}

.preview {
    width: 42px;
    height: 36px;
    margin-right: 16px;
}

.details dl {
    display: grid;
    grid-template-columns: 54px 74px 136px 72px auto;
    grid-auto-rows: 18px;
    margin: 0;
    line-height: 18px;
    white-space: nowrap;
}

.details dd {
    margin: 0;
}

.details .label {
    padding-right: 4px;
    text-align: right;
}

.file-name {
    font-size: 12px;
}

/* Taskbar */
.taskbar {
    display: flex;
    align-items: center;
    height: 27px;
    padding: 0 0 0 2px;
    border-top: 1px solid #d4d0c8;
    box-shadow: inset 0 1px #fff;
}

.start {
    width: 52px;
    height: 22px;
    gap: 1px;
    font-size: 12px;
    font-weight: bold;
}

.tasks {
    display: flex;
    gap: 2px;
    margin-left: 9px;
}

.tasks button {
    width: 32px;
    height: 22px;
}

.tasks svg,
.tray svg {
    width: 18px;
    height: 18px;
}

.tasks .pressed {
    background-color: #fff;
    border: 1px solid;
    border-color: #404040 #fff #fff #404040;
}

.tray {
    display: flex;
    align-items: center;
    gap: 6px;
    width: 174px;
    height: 22px;
    margin-left: auto;
    padding: 0 3px 0 4px;
    border: 1px solid;
    border-color: #808080 #fff #fff #808080;
}

.tray .chevrons {
    width: 8px;
    height: 10px;
    margin-right: 3px;
}

.tray .icon {
    width: 16px;
    height: 16px;
}

.clock {
    margin: 0 5px 0 auto;
}

/* Watermark */
.watermark {
    position: absolute;
    right: 47px;
    bottom: 46px;
    display: flex;
    align-items: center;
    gap: 4px;
    font-family: "Roboto Condensed", Roboto, sans-serif;
    font-size: 39px;
    color: #fff;
    text-shadow: 0 0 2px #c8c8c8, 0 0 4px #d4d4d4;
    pointer-events: none;
}

.watermark svg {
    width: 58px;
    height: 66px;
}
```
